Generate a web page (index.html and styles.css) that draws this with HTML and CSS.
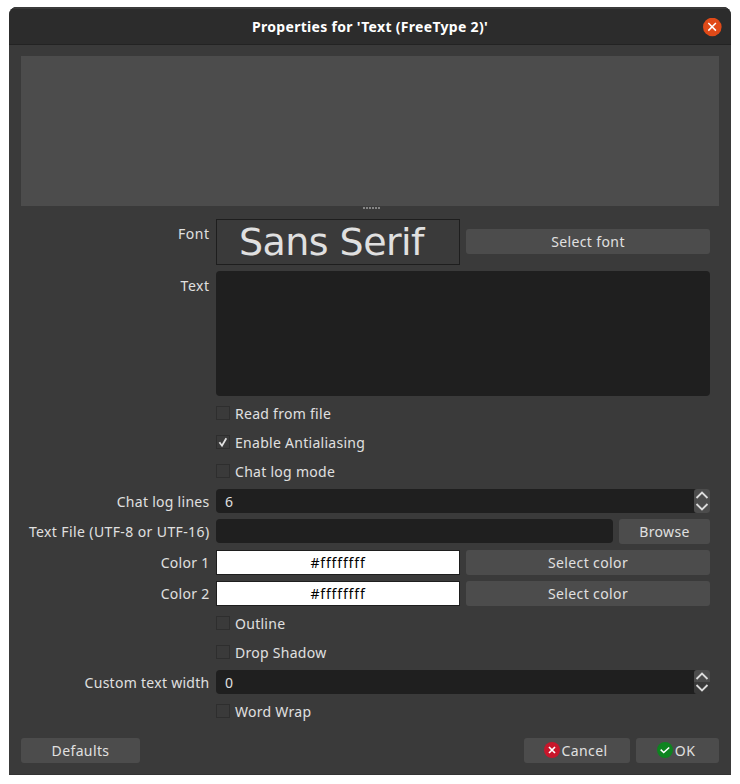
FILE: index.html
```html
<!DOCTYPE html>
<html lang="en">
<head>
<meta charset="utf-8">
<title>Properties for 'Text (FreeType 2)'</title>
<link rel="stylesheet" href="styles.css">
</head>
<body>
<main class="window">
  <header class="titlebar">
    <h1 class="title">Properties for 'Text (FreeType 2)'</h1>
    <svg class="close" viewBox="0 0 19 19"><circle cx="9.3" cy="9" r="9.3" fill="#e04a18"/><path d="M5.3 5l7.6 7.6M12.9 5l-7.6 7.6" stroke="#fff" stroke-width="1.5"/></svg>
  </header>
  <div class="content">
    <div class="preview"></div>
    <div class="splitter"><i></i><i></i><i></i><i></i><i></i><i></i></div>
    <form class="form">
      <label class="label tall">Font</label>
      <div class="row font-row"><div class="font-sample"><span>Sans Serif</span></div><button type="button" class="btn half">Select font</button></div>
      <label class="label tall">Text</label>
      <div class="textarea"></div>
      <div class="check"><span class="box"></span><span>Read from file</span></div>
      <div class="check"><span class="box"><svg viewBox="0 0 14 14"><path d="M3.4 7.3l2.6 3.4 4.3-7.5" fill="none" stroke="#e0e0e0" stroke-width="1.8"/></svg></span><span>Enable Antialiasing</span></div>
      <div class="check"><span class="box"></span><span>Chat log mode</span></div>
      <label class="label">Chat log lines</label>
      <div class="spin"><span>6</span><div class="steps"><svg viewBox="0 0 16 24"><path d="M2.5 9l5.5-5.5L13.5 9M2.5 15l5.5 5.5 5.5-5.5" fill="none" stroke="#dcdcdc" stroke-width="1.8"/></svg></div></div>
      <label class="label file-label">Text File (UTF-8 or UTF-16)</label>
      <div class="row"><div class="input"></div><button type="button" class="btn browse">Browse</button></div>
      <label class="label">Color 1</label>
      <div class="row"><div class="swatch">#ffffffff</div><button type="button" class="btn half">Select color</button></div>
      <label class="label">Color 2</label>
      <div class="row"><div class="swatch">#ffffffff</div><button type="button" class="btn half">Select color</button></div>
      <div class="check"><span class="box"></span><span>Outline</span></div>
      <div class="check"><span class="box"></span><span>Drop Shadow</span></div>
      <label class="label">Custom text width</label>
      <div class="spin"><span>0</span><div class="steps split"><svg viewBox="0 0 16 24"><path d="M2.5 9l5.5-5.5L13.5 9M2.5 15l5.5 5.5 5.5-5.5" fill="none" stroke="#dcdcdc" stroke-width="1.8"/></svg></div></div>
      <div class="check"><span class="box"></span><span>Word Wrap</span></div>
    </form>
    <footer class="footer">
      <button type="button" class="btn defaults">Defaults</button>
      <button type="button" class="btn cancel"><svg viewBox="0 0 16 16"><circle cx="8" cy="8" r="8" fill="#c7162b"/><path d="M5 5l6 6M11 5l-6 6" stroke="#fff" stroke-width="1.7"/></svg>Cancel</button>
      <button type="button" class="btn ok"><svg viewBox="0 0 16 16"><circle cx="8" cy="8" r="8" fill="#0e8420"/><path d="M3.7 7.7l3 2.8 5.5-5" fill="none" stroke="#fff" stroke-width="1.6"/></svg>OK</button>
    </footer>
  </div>
</main>
</body>
</html>
```
FILE: styles.css
```css
* { box-sizing: border-box; }
body {
  margin: 0;
  padding: 7px 9px 9px;
  height: 784px;
  background: #fff;
  color: #e0e0e0;
  font: 14px/20px "Noto Sans", "Open Sans", sans-serif;
  letter-spacing: 0.28px;
}
.window {
  width: 722px;
  height: 768px;
  background: #3a3a3a;
  border-radius: 8px 8px 0 0;
  overflow: hidden;
  box-shadow: inset 0 -1px #333;
}
.titlebar {
  display: grid;
  grid-template-columns: 1fr auto 1fr;
  align-items: center;
  height: 38px;
  background: #2c2c2c;
  border-top: 2px solid #3a3a3a;
  border-bottom: 1px solid #232323;
  padding-right: 9px;
}
.title {
  grid-column: 2;
  margin: 1px 0 0 9px;
  color: #fff;
  font-size: 14px;
  line-height: 20px;
  font-weight: 700;
  letter-spacing: 0.31px;
}
.close { justify-self: end; width: 19px; height: 19px; margin-top: 1px; }
.content { padding: 11px 12px 0; }
.preview { height: 150px; background: #4c4c4c; }
.splitter { height: 13px; padding: 1px 0 0 3px; display: flex; justify-content: center; gap: 1px; }
.splitter i { width: 2px; height: 2px; background: #858585; }
.form {
  display: grid;
  grid-template-columns: 189px 494px;
  gap: 6px;
  align-items: start;
}
.label { padding: 3px 0.5px 0 0; text-align: right; white-space: nowrap; height: 24px; }
.tall { padding-top: 5px; letter-spacing: 0.5px; }
.file-label { letter-spacing: 0.39px; }
.row { display: flex; gap: 6px; align-items: center; height: 25px; }
.font-row { height: 46px; }
.font-row .btn { margin-bottom: 1px; }
.font-sample {
  width: 244px;
  height: 46px;
  border: 1px solid #1e1e1e;
  padding-left: 22px;
  font: 38px/44px "DejaVu Sans", sans-serif;
  letter-spacing: -0.55px;
  white-space: nowrap;
}
.btn {
  display: flex;
  align-items: center;
  justify-content: center;
  height: 25px;
  padding: 0;
  border: 0;
  border-radius: 3px;
  background: #4c4c4c;
  color: #e0e0e0;
  font: inherit;
  letter-spacing: 0.38px;
}
.half { width: 244px; }
.textarea { height: 125px; background: #1f1f1f; border-radius: 4px; }
.check { grid-column: 2; height: 23px; display: flex; gap: 5px; }
.box { width: 14px; height: 14px; margin-top: 4px; border: 1px solid #2e2e2e; }
.box svg { display: block; width: 14px; height: 14px; margin: -1px; }
.check span:last-child { padding-top: 2px; }
.spin {
  display: flex;
  justify-content: space-between;
  height: 24px;
  padding-left: 9px;
  line-height: 25px;
  background: #1f1f1f;
  border-radius: 4px;
}
.steps { width: 16px; height: 24px; background: #4c4c4c; border-radius: 3px; }
.split { background: linear-gradient(#4c4c4c 50%, #3a3a3a 50%); }
.steps svg { display: block; width: 16px; height: 24px; }
.input { width: 397px; height: 24px; align-self: flex-start; background: #1f1f1f; border-radius: 4px; }
.browse { width: 91px; }
.swatch {
  width: 244px;
  height: 25px;
  border: 1px solid #1e1e1e;
  background: #fff;
  color: #000;
  text-align: center;
  line-height: 24px;
  letter-spacing: 0.85px;
}
.footer { display: flex; gap: 6px; margin-top: 15px; }
.defaults { width: 119px; margin-right: auto; }
.cancel { width: 106px; }
.ok { width: 83px; }
.btn svg { width: 16px; height: 16px; margin: -1px 2px 0 -3px; }
```
